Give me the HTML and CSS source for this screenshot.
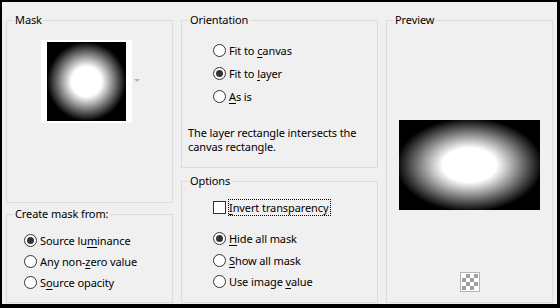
FILE: index.html
```html
<!DOCTYPE html>
<html>
<head>
<meta charset="utf-8">
<link rel="stylesheet" href="styles.css">
</head>
<body>
<div class="frame">
  <div class="dialog">
    <div class="col">
      <fieldset class="grp mask">
        <legend>Mask</legend>
        <div class="mask-row">
          <div class="thumb"><div class="thumb-img"></div></div>
          <span class="drop-arrow"></span>
        </div>
      </fieldset>
      <fieldset class="grp create">
        <legend>Create mask from:</legend>
        <div class="opts create-opts">
          <div class="opt"><span class="radio on"></span><span>Source lu<u>m</u>inance</span></div>
          <div class="opt"><span class="radio"></span><span>Any non-<u>z</u>ero value</span></div>
          <div class="opt"><span class="radio"></span><span>S<u>o</u>urce opacity</span></div>
        </div>
      </fieldset>
    </div>
    <div class="col">
      <fieldset class="grp orient">
        <legend>Orientation</legend>
        <div class="opts orient-opts">
          <div class="opt"><span class="radio"></span><span>Fit to <u>c</u>anvas</span></div>
          <div class="opt"><span class="radio on"></span><span>Fit to <u>l</u>ayer</span></div>
          <div class="opt"><span class="radio"></span><span><u>A</u>s is</span></div>
        </div>
        <p class="desc">The layer rectangle intersects the<br>canvas rectangle.</p>
      </fieldset>
      <fieldset class="grp options">
        <legend>Options</legend>
        <div class="opts options-opts">
          <div class="opt"><span class="check"></span><span class="focus"><u>I</u>nvert transparency</span></div>
        </div>
        <div class="opts options-radios">
          <div class="opt"><span class="radio on"></span><span><u>H</u>ide all mask</span></div>
          <div class="opt"><span class="radio"></span><span><u>S</u>how all mask</span></div>
          <div class="opt"><span class="radio"></span><span>Use image <u>v</u>alue</span></div>
        </div>
      </fieldset>
    </div>
    <fieldset class="grp preview">
      <legend>Preview</legend>
      <div class="preview-img"></div>
      <div class="checker"><div class="checker-in"></div></div>
    </fieldset>
  </div>
</div>
</body>
</html>
```

FILE: styles.css
```css
html, body {
  margin: 0;
  padding: 0;
  background: #000;
}
body {
  font-family: "Noto Sans", "Open Sans", sans-serif;
  font-size: 11px;
  letter-spacing: -0.1px;
  color: #000;
}
.frame {
  width: 560px;
  height: 308px;
  box-sizing: border-box;
  padding: 2px 3px 4px 2px;
  background: #000;
}
.dialog {
  height: 100%;
  box-sizing: border-box;
  background: #f0f0f0;
  display: grid;
  grid-template-columns: 167px 197px 167px;
  column-gap: 8px;
  align-items: start;
  padding: 10px 4px 0 4px;
}
.col {
  display: flex;
  flex-direction: column;
}
.grp {
  margin: 0;
  padding: 0;
  min-width: 0;
  box-sizing: border-box;
  border: 1px solid #dcdcdc;
}
.grp legend {
  margin-left: 6px;
  padding: 0 2px;
  line-height: 16px;
  font-size: 11px;
}
.mask { height: 191px; }
.create { height: 97px; margin-top: 3px; }
.orient { height: 156px; }
.options { height: 130px; margin-top: 5px; }
.preview { height: 291px; display: flex; flex-direction: column; align-items: center; }

.mask-row {
  display: flex;
  align-items: center;
  padding: 12px 0 0 34px;
}
.thumb {
  width: 91px;
  height: 83px;
  background: #fff;
  display: flex;
  align-items: center;
  justify-content: center;
}
.thumb-img {
  width: 79px;
  height: 79px;
  background: radial-gradient(circle closest-side, #fff 0, #fff 38%, #000 100%);
}
.drop-arrow {
  width: 0;
  height: 0;
  margin-left: 2px;
  margin-top: -2px;
  border-left: 3px solid transparent;
  border-right: 3px solid transparent;
  border-top: 3px solid #b4b4b4;
}

.opts {
  display: flex;
  flex-direction: column;
}
.opt {
  display: flex;
  align-items: center;
  gap: 3px;
  white-space: nowrap;
}
.create-opts { padding: 8px 0 0 17px; }
.create-opts .opt { height: 21px; }
.orient-opts { padding: 11px 0 0 31px; }
.orient-opts .opt { height: 23px; }
.options-opts { padding: 8px 0 0 31px; }
.options-opts .opt { height: 21px; }
.options-radios { padding: 10px 0 0 31px; }
.options-radios .opt { height: 21.5px; }

.radio {
  width: 13px;
  height: 13px;
  box-sizing: border-box;
  border: 1px solid #333;
  border-radius: 50%;
  background: #fff;
  display: flex;
  align-items: center;
  justify-content: center;
  flex: none;
}
.radio.on::after {
  content: "";
  width: 7px;
  height: 7px;
  border-radius: 50%;
  background: #333;
}
.check {
  width: 13px;
  height: 13px;
  box-sizing: border-box;
  border: 1px solid #333;
  background: #fff;
  flex: none;
}
.focus {
  outline: 1px dotted #000;
  outline-offset: 0;
  padding: 0 1px 0 0;
  line-height: 15px;
}
u {
  text-decoration-thickness: 1px;
  text-underline-offset: 2px;
}
.desc {
  margin: 18px 0 0 6px;
  line-height: 14px;
}

.preview-img {
  margin-top: 92px;
  width: 141px;
  height: 90px;
  background: radial-gradient(ellipse closest-side, #fff 0, #fff 38%, #000 104%);
}
.checker {
  margin-top: 62px;
  width: 20px;
  height: 20px;
  box-sizing: border-box;
  border: 1px solid #b4b4b4;
  background: #fff;
  padding: 1px;
}
.checker-in {
  width: 16px;
  height: 16px;
  background: repeating-conic-gradient(#a0a0a0 0 25%, #fff 0 50%) 0 0 / 8px 8px;
}
```
